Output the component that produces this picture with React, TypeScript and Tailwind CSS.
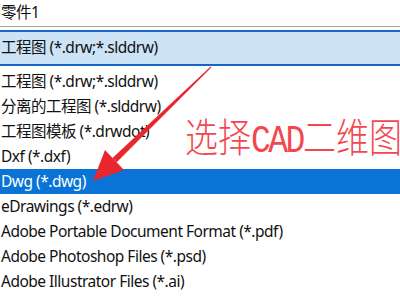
const rows = [
  "工程图 (*.drw;*.slddrw)",
  "分离的工程图 (*.slddrw)",
  "工程图模板 (*.drwdot)",
  "Dxf (*.dxf)",
  "Dwg (*.dwg)",
  "eDrawings (*.edrw)",
  "Adobe Portable Document Format (*.pdf)",
  "Adobe Photoshop Files (*.psd)",
  "Adobe Illustrator Files (*.ai)",
  "JPEG (*.jpg)",
]

const font = { fontFamily: '"Noto Sans", "Noto Sans CJK SC", sans-serif' }

export default function App() {
  return (
    <div
      className="relative w-[400px] h-[300px] overflow-hidden bg-white text-[15.5px] tracking-[-0.5px] text-[#111]"
      style={font}
    >
      {/* file name field */}
      <div className="h-[26px] flex items-center pl-px leading-none">零件1</div>
      <div className="h-px bg-[#a3a3a3]" />
      <div className="h-[3px]" />

      {/* save-as type combobox */}
      <div className="h-[36px] border-y-2 border-[#1667c4] bg-[#cde3f6] flex items-center pl-px">
        <span className="leading-none">工程图 (*.drw;*.slddrw)</span>
      </div>

      {/* dropdown list */}
      <div className="pt-[3px]">
        {rows.map((r, i) => (
          <div
            key={r}
            className={
              i === 4
                ? "h-[25px] flex items-center pl-px bg-[#0a74d6] text-white"
                : "h-[25px] flex items-center pl-px"
            }
          >
            <span className="leading-none whitespace-nowrap">{r}</span>
          </div>
        ))}
      </div>

      {/* annotation arrow */}
      <svg className="absolute left-0 top-0" width="400" height="300" viewBox="0 0 400 300">
        <polygon points="211.3,67.4 210.7,66.6 112.5,157.9 116.7,162.3" fill="#e8262d" />
        <polygon points="93,181 105,150 124,170" fill="#e8262d" />
      </svg>

      {/* annotation label */}
      <div
        className="absolute left-[185px] top-[116px] whitespace-nowrap text-[33px] leading-none font-extralight tracking-normal text-[#f4464e] origin-top scale-y-[1.2]"
        style={{ fontFamily: '"Noto Sans CJK SC", sans-serif' }}
      >
        选择
        <span
          className="tracking-[-2.5px]"
          style={{ fontFamily: '"Liberation Mono", monospace' }}
        >
          CAD
        </span>
        二维图
      </div>
    </div>
  )
}
